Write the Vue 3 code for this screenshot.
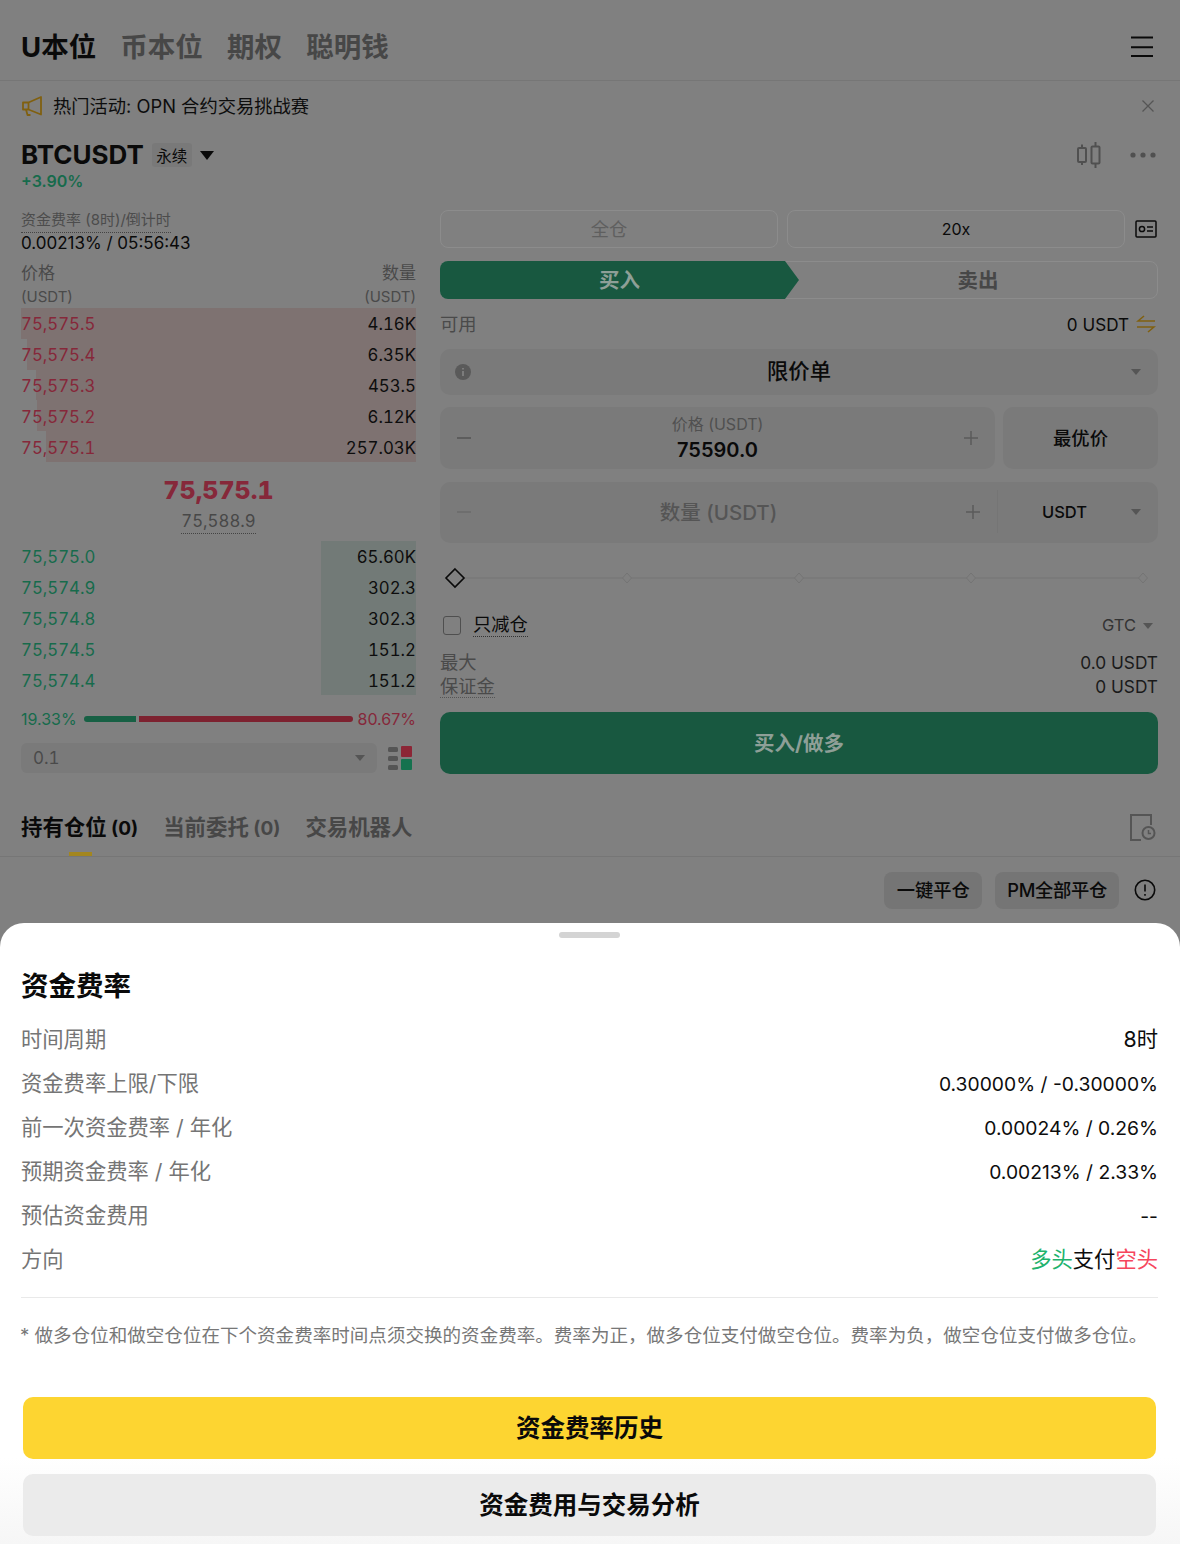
<script setup>
const mainTabs = ['币本位', '期权', '聪明钱']
const asks = [
  { p: '75,575.5', q: '4.16K', w: 395 },
  { p: '75,575.4', q: '6.35K', w: 389 },
  { p: '75,575.3', q: '453.5', w: 380 },
  { p: '75,575.2', q: '6.12K', w: 379 },
  { p: '75,575.1', q: '257.03K', w: 370 },
]
const bids = [
  { p: '75,575.0', q: '65.60K', w: 95 },
  { p: '75,574.9', q: '302.3', w: 95 },
  { p: '75,574.8', q: '302.3', w: 95 },
  { p: '75,574.5', q: '151.2', w: 95 },
  { p: '75,574.4', q: '151.2', w: 95 },
]
const rates = [
  ['资金费率上限/下限', '0.30000% / -0.30000%'],
  ['前一次资金费率 / 年化', '0.00024% / 0.26%'],
  ['预期资金费率 / 年化', '0.00213% / 2.33%'],
  ['预估资金费用', '--'],
]
const ticks = [187, 359, 531, 703]
</script>

<template>
  <div class="page">
    <header class="top">
      <div class="top-tabs">
        <span class="top-tab on">U本位</span>
        <span v-for="t in mainTabs" :key="t" class="top-tab">{{ t }}</span>
      </div>
      <svg class="menu" width="24" height="22" viewBox="0 0 24 22"><path d="M1 1.500h22M1 11.300h22M1 20h22" stroke="#0a0a0a" stroke-width="2"/></svg>
    </header>

    <div class="notice">
      <svg width="22" height="22" viewBox="0 0 22 22" fill="none" stroke="#806010" stroke-width="1.800" stroke-linejoin="round"><path d="M2 7.500h5.500L20 2v17.500L7.500 14.500H2z"/><path d="M5 14.500l1.500 5.500h3"/><path d="M7.500 7.500v7"/></svg>
      <span class="notice-text">热门活动: OPN 合约交易挑战赛</span>
      <svg class="close" width="14" height="14" viewBox="0 0 14 14"><path d="M1.500 1.500l11 11M12.500 1.500l-11 11" stroke="#555" stroke-width="1.300"/></svg>
    </div>

    <div class="symbol">
      <span class="sym-name">BTCUSDT</span>
      <span class="sym-badge">永续</span>
      <span class="sym-caret"></span>
      <span class="sym-tools">
        <svg width="25" height="26" viewBox="0 0 25 26" fill="none" stroke="#505050" stroke-width="2"><rect x="2" y="6" width="8" height="14" rx="1"/><rect x="15.500" y="4.500" width="8" height="17" rx="1"/><path d="M6 2.500V6M6 20v3M19.500 0v4.500M19.500 21.500V26"/></svg>
        <svg class="dots" width="26" height="6" viewBox="0 0 26 6" fill="#505050"><circle cx="3" cy="3" r="2.600"/><circle cx="13" cy="3" r="2.600"/><circle cx="23" cy="3" r="2.600"/></svg>
      </span>
    </div>
    <div class="change">+3.90%</div>

    <div class="main">
      <section class="left">
        <div class="fund-label"><span>资金费率 (8时)/倒计时</span></div>
        <div class="fund-value">0.00213% / 05:56:43</div>
        <div class="book-head">
          <div><div class="hd1">价格</div><div class="hd2">(USDT)</div></div>
          <div class="r"><div class="hd1">数量</div><div class="hd2">(USDT)</div></div>
        </div>
        <div class="book">
          <div v-for="a in asks" :key="a.p" class="book-row">
            <i class="bar ask-bar" :style="{ width: a.w + 'px' }"></i>
            <span class="ask-p">{{ a.p }}</span><span class="qty">{{ a.q }}</span>
          </div>
        </div>
        <div class="mid">
          <div class="mid-price">75,575.1</div>
          <div class="mark"><span>75,588.9</span></div>
        </div>
        <div class="book">
          <div v-for="(b, i) in bids" :key="i" class="book-row">
            <i class="bar bid-bar" :style="{ width: b.w + 'px' }"></i>
            <span class="bid-p">{{ b.p }}</span><span class="qty">{{ b.q }}</span>
          </div>
        </div>
        <div class="ratio">
          <span class="bid-p pct">19.33%</span>
          <i class="r-green"></i><i class="r-red"></i>
          <span class="ask-p pct">80.67%</span>
        </div>
        <div class="depth">
          <div class="depth-select"><span>0.1</span><i class="tri"></i></div>
          <svg width="24" height="24" viewBox="0 0 24 24"><rect x="0" y="1" width="10" height="5" rx="1.500" fill="#555"/><rect x="0" y="10" width="10" height="5" rx="1.500" fill="#555"/><rect x="0" y="19" width="10" height="5" rx="1.500" fill="#555"/><rect x="13" y="0" width="11" height="11" rx="1" fill="#8c2636"/><rect x="13" y="13" width="11" height="11" rx="1" fill="#16724f"/></svg>
        </div>
      </section>

      <section class="right">
        <div class="lev">
          <div class="lev-box muted">全仓</div>
          <div class="lev-box">20x</div>
          <svg width="22" height="20" viewBox="0 0 22 20" fill="none" stroke="#0a0a0a" stroke-width="1.500"><rect x="1" y="2" width="20" height="16" rx="1"/><circle cx="7" cy="10" r="2.600"/><path d="M12 8h6M12 12h6"/></svg>
        </div>
        <div class="side">
          <div class="buy">买入</div>
          <div class="sell">卖出</div>
        </div>
        <div class="avail">
          <span class="lbl">可用</span>
          <span class="avail-v">0 USDT
            <svg width="20" height="20" viewBox="0 0 20 20" fill="none" stroke="#806010" stroke-width="1.600"><path d="M19 7H2l6-5M1 13h17l-6 5"/></svg>
          </span>
        </div>
        <div class="order">
          <svg class="info" width="16" height="16" viewBox="0 0 16 16"><circle cx="8" cy="8" r="8" fill="#5a5a5a"/><path d="M8 7v5M8 4v1.600" stroke="#808080" stroke-width="1.800"/></svg>
          <span>限价单</span>
          <i class="tri right-tri"></i>
        </div>
        <div class="price-row">
          <div class="field price">
            <svg class="pm" width="16" height="16" viewBox="0 0 16 16"><path d="M1 8h14" stroke="#5b5b5b" stroke-width="1.800"/></svg>
            <div class="price-c"><div class="price-l">价格 (USDT)</div><div class="price-v">75590.0</div></div>
            <svg class="pm" width="16" height="16" viewBox="0 0 16 16"><path d="M1 8h14M8 1v14" stroke="#5b5b5b" stroke-width="1.500"/></svg>
          </div>
          <div class="best">最优价</div>
        </div>
        <div class="field qty-f">
          <svg class="pm" width="16" height="16" viewBox="0 0 16 16"><path d="M1 8h14" stroke="#6e6e6e" stroke-width="1.800"/></svg>
          <div class="qty-c">数量 (USDT)</div>
          <svg class="pm" width="16" height="16" viewBox="0 0 16 16"><path d="M1 8h14M8 1v14" stroke="#5b5b5b" stroke-width="1.500"/></svg>
          <div class="unit"><span>USDT</span><i class="tri"></i></div>
        </div>
        <svg class="slider" width="718" height="70" viewBox="0 0 718 70" fill="none">
          <path d="M24 35H703" stroke="#757575" stroke-width="1.200"/>
          <g v-for="t in ticks" :key="t"><path :d="`M${t} 30l4.500 5-4.500 5-4.500-5z`" fill="#808080" stroke="#747474"/></g>
          <path d="M15 26l9 9-9 9-9-9z" fill="#808080" stroke="#0a0a0a" stroke-width="1.600"/>
        </svg>
        <div class="reduce">
          <i class="check"></i>
          <span class="reduce-t">只减仓</span>
          <span class="gtc">GTC<i class="tri sm"></i></span>
        </div>
        <div class="stats">
          <div><div>最大</div><div class="dot-t">保证金</div></div>
          <div class="r stats-v"><div>0.0 USDT</div><div>0 USDT</div></div>
        </div>
        <div class="cta">买入/做多</div>
      </section>
    </div>

    <nav class="pos-tabs">
      <span class="pos-tab on">持有仓位<small> (0)</small></span>
      <span class="pos-tab">当前委托<small> (0)</small></span>
      <span class="pos-tab">交易机器人</span>
      <svg class="hist" width="27" height="28" viewBox="0 0 27 28" fill="none" stroke="#555" stroke-width="2"><path d="M22 12V2H2v25h10"/><circle cx="19.500" cy="20" r="6"/><path d="M19.500 17v3.500h2.500" stroke-width="1.500"/></svg>
    </nav>
    <div class="actions">
      <span class="act">一键平仓</span>
      <span class="act act-pm">PM全部平仓</span>
      <svg width="22" height="22" viewBox="0 0 22 22" fill="none" stroke="#0a0a0a" stroke-width="1.600"><circle cx="11" cy="11" r="9.700"/><path d="M11 5.500v7M11 15v1.800"/></svg>
    </div>

    <aside class="sheet">
      <div class="handle"></div>
      <h2 class="sheet-title">资金费率</h2>
      <div class="rate">
        <span class="rate-k">时间周期</span>
        <span class="rate-v cjk">8时</span>
      </div>
      <div class="rate" v-for="r in rates" :key="r[0]">
        <span class="rate-k">{{ r[0] }}</span><span class="rate-v">{{ r[1] }}</span>
      </div>
      <div class="rate">
        <span class="rate-k">方向</span>
        <span class="rate-v cjk"><b class="long">多头</b>支付<b class="short">空头</b></span>
      </div>
      <div class="divider"></div>
      <p class="note">* 做多仓位和做空仓位在下个资金费率时间点须交换的资金费率。费率为正，做多仓位支付做空仓位。费率为负，做空仓位支付做多仓位。</p>
      <button class="btn yellow">资金费率历史</button>
      <button class="btn gray">资金费用与交易分析</button>
    </aside>
  </div>
</template>

<style>
html, body { margin: 0; background: #808080; }
</style>

<style scoped>
* { box-sizing: border-box; }
.page {
  position: relative; width: 1180px; height: 1544px; overflow: hidden;
  background: #808080; color: #0a0a0a;
  font-family: Inter, "Noto Sans CJK SC", sans-serif; font-size: 17px;
}
i { display: block; font-style: normal; }
.r { text-align: right; }

.top { height: 81px; display: flex; align-items: center; justify-content: space-between; padding: 10px 26px 0 21px; border-bottom: 1px solid #767676; }
.top-tabs { display: flex; gap: 24.200px; }
.top-tab { font-size: 27.500px; font-weight: 700; color: #474747; }
.top-tab.on { color: #0a0a0a; }
.menu { margin-top: 4px; }

.notice { height: 51px; display: flex; align-items: center; padding: 0 25px 2px 21px; }
.notice-text { margin: 0 0 2px 10px; font-size: 18.300px; color: #0d0d0d; flex: 1; }

.symbol { height: 30px; margin-top: 8px; display: flex; align-items: center; padding: 0 24px 0 21px; }
.sym-name { font-size: 26px; font-weight: 700; padding-bottom: 2px; }
.sym-badge { margin-left: 8px; width: 40px; height: 24px; border-radius: 3px; background: #797979; font-size: 15.500px; display: flex; align-items: center; justify-content: center; }
.sym-caret { margin-left: 8px; width: 0; height: 0; border-left: 7px solid transparent; border-right: 7px solid transparent; border-top: 9px solid #0a0a0a; }
.sym-tools { margin-left: auto; display: flex; align-items: center; }
.dots { margin-left: 29px; }
.change { height: 22px; line-height: 22px; padding-left: 21px; font-size: 16px; font-weight: 600; color: #176b4c; }

.main { display: flex; gap: 24px; padding: 0 22px 0 21px; margin-top: 18px; }
.left { width: 395px; }
.right { width: 718px; }

.fund-label { height: 23px; line-height: 20px; font-size: 15px; color: #4c4c4c; }
.fund-label span { display: inline-block; height: 23px; border-bottom: 1px dotted #444; }
.fund-value { height: 19px; line-height: 21px; font-size: 17px; }
.book-head { margin-top: 10px; height: 46px; display: flex; justify-content: space-between; color: #4a4a4a; }
.hd1 { height: 23px; line-height: 23px; font-size: 17px; }
.hd2 { height: 23px; line-height: 23px; font-size: 15px; }

.book-row { position: relative; height: 30.800px; padding-top: 2px; display: flex; align-items: center; justify-content: space-between; font-size: 16.800px; font-variant-numeric: tabular-nums; }
.book-row span { position: relative; }
.bar { position: absolute; right: 0; top: 0; bottom: 0; }
.ask-bar { background: #7e7271; }
.bid-bar { background: #727a77; }
.ask-p { color: #86283a; }
.bid-p { color: #176b4c; }
.qty { color: #0d0d0d; }

.mid { height: 79px; padding-top: 12px; text-align: center; }
.mid-price { height: 32px; line-height: 32px; font-size: 25px; font-weight: 800; color: #86283a; font-variant-numeric: tabular-nums; }
.mark { margin-top: 4px; height: 24px; font-size: 16.800px; color: #484848; font-variant-numeric: tabular-nums; }
.mark span { display: inline-block; height: 24px; line-height: 22px; border-bottom: 1px dotted #444; }

.ratio { margin-top: 14px; height: 20px; display: flex; align-items: center; padding-top: 1px; }
.pct { font-size: 16px; }
.r-green { margin-left: 7px; width: 52px; height: 6px; background: #176044; border-radius: 3px 0 0 3px; }
.r-red { margin-left: 3px; width: 214px; height: 6px; background: #7d2230; border-radius: 0 3px 3px 0; }
.ratio .pct:last-child { margin-left: auto; }
.depth { margin-top: 14px; display: flex; align-items: center; justify-content: space-between; padding-right: 4px; }
.depth-select { width: 356px; height: 30px; border-radius: 6px; background: #7a7a7a; display: flex; align-items: center; justify-content: space-between; padding: 1px 12px 0; color: #4a4a4a; font-variant-numeric: tabular-nums; }
.tri { width: 0; height: 0; border-left: 5px solid transparent; border-right: 5px solid transparent; border-top: 6px solid #555; }
.tri.sm { display: inline-block; margin-left: 7px; vertical-align: 2px; }

.lev { height: 38px; display: flex; align-items: center; }
.lev-box { width: 338px; height: 38px; margin-right: 9px; border: 1px solid #8c8c8c; border-radius: 8px; display: flex; align-items: center; justify-content: center; font-size: 16px; }
.lev-box.muted { color: #5f5f5f; font-size: 18.300px; padding-bottom: 2px; }
.lev svg { margin-left: 1px; }

.side { margin-top: 13px; height: 38px; display: flex; border: 1px solid #8c8c8c; border-radius: 8px; position: relative; font-size: 20.500px; font-weight: 700; }
.buy { margin: -1px 0 -1px -1px; width: 359px; padding-bottom: 2px; background: #185840; color: #8e9f97; border-radius: 8px 0 0 8px; display: flex; align-items: center; justify-content: center; clip-path: polygon(0 0, 345px 0, 100% 50%, 345px 100%, 0 100%); }
.sell { flex: 1; padding-bottom: 2px; color: #474747; display: flex; align-items: center; justify-content: center; }

.avail { height: 50px; display: flex; align-items: center; justify-content: space-between; padding-right: 2px; }
.lbl { color: #4a4a4a; font-size: 18.300px; padding-bottom: 2px; }
.avail-v { display: flex; align-items: center; gap: 7px; font-size: 17.100px; }

.order { height: 46px; padding-bottom: 5px; border-radius: 10px; background: #7a7a7a; position: relative; display: flex; align-items: center; justify-content: center; font-size: 21.300px; font-weight: 500; }
.info { position: absolute; left: 15px; top: 15px; }
.right-tri { position: absolute; right: 17px; top: 20px; }

.price-row { margin-top: 12px; display: flex; gap: 8px; }
.field { background: #7a7a7a; border-radius: 10px; display: flex; align-items: center; }
.price { width: 555px; height: 62px; padding: 0 16px; justify-content: space-between; }
.pm { flex: none; }
.price-c { text-align: center; padding-top: 3px; }
.price-l { font-size: 16px; line-height: 20px; color: #505050; margin: -2px 0 2px; }
.price-v { font-size: 20px; line-height: 28px; font-weight: 600; }
.best { flex: 1; height: 62px; padding-bottom: 3px; border-radius: 10px; background: #7a7a7a; display: flex; align-items: center; justify-content: center; font-size: 18.300px; font-weight: 500; }

.qty-f { margin-top: 13px; height: 61px; padding: 0 0 2px 16px; }
.qty-c { width: 493px; padding-bottom: 2px; text-align: center; font-size: 20.500px; font-weight: 500; color: #555; }
.unit { margin-left: 16px; height: 43px; flex: 1; border-left: 1px solid #757575; display: flex; align-items: center; padding: 0 17px 0 44px; justify-content: space-between; font-size: 16.500px; font-weight: 500; }
.slider { display: block; }

.reduce { height: 24px; display: flex; align-items: center; padding-left: 3px; }
.check { width: 18px; height: 19px; border: 1.500px solid #4f4f4f; border-radius: 3px; }
.reduce-t { margin-left: 12px; height: 24px; line-height: 23px; border-bottom: 1px dotted #333; font-size: 18.300px; }
.gtc { margin-left: auto; font-size: 16.500px; color: #333; padding-right: 5px; }

.stats { margin-top: 13px; height: 48px; display: flex; justify-content: space-between; line-height: 24px; color: #4a4a4a; font-size: 18.300px; }
.dot-t { border-bottom: 1px dotted #555; height: 24px; }
.stats-v { color: #1a1a1a; font-size: 17.300px; padding-top: 1px; }
.cta { margin-top: 14px; height: 62px; padding-bottom: 2px; border-radius: 10px; background: #185840; color: #8e9f97; display: flex; align-items: center; justify-content: center; font-size: 20.500px; font-weight: 700; }

.pos-tabs { position: relative; margin-top: 24px; height: 59px; padding: 0 24px 0 21px; display: flex; align-items: center; gap: 25px; border-bottom: 1px solid #767676; }
.pos-tabs::after { content: ""; position: absolute; left: 69px; width: 23px; bottom: 0; height: 4px; background: #a3861f; }
.pos-tab { font-size: 21.400px; font-weight: 700; color: #474747; padding-bottom: 3px; }
.pos-tab small { font-size: 19px; }
.pos-tab.on { color: #0a0a0a; }
.hist { margin-left: auto; }
.actions { padding: 15px 24px 0 0; display: flex; justify-content: flex-end; align-items: center; gap: 13px; }
.act { height: 37px; padding: 0 12.500px 3px; border-radius: 8px; background: #757575; display: flex; align-items: center; font-size: 18.300px; font-weight: 500; }
.act-pm { letter-spacing: -.3px; padding: 0 12px 3px; }
.actions svg { margin: 0 0 1px 2px; }

.sheet { position: absolute; left: 0; right: 0; top: 923px; bottom: 0; background: linear-gradient(#fff 86%, #f6f6f6 100%); border-radius: 24px 24px 0 0; padding: 9px 22px 0 22px; color: #0d0d0d; }
.handle { width: 61px; height: 6px; margin: 0 0 0 537px; border-radius: 3px; background: #d4d4d4; }
.sheet-title { margin: 30px 0 13px -1px; font-size: 27.500px; line-height: 36px; font-weight: 700; color: #0a0a0a; }
.rate { height: 44px; line-height: 44px; display: flex; align-items: baseline; justify-content: space-between; font-size: 21.300px; margin-left: -1px; }
.rate-k { color: #757575; }
.rate-v { font-size: 19.300px; }
.rate-v.cjk { font-size: 21.300px; }
.rate-v b { font-weight: 400; }
.long { color: #20b26c; }
.short { color: #f6465d; }
.divider { margin: 16px 0 0 -1px; height: 1px; background: #e9e9e9; }
.note { margin: 25px 0 0 -2px; height: 24px; line-height: 24px; font-size: 18.560px; color: #777; white-space: nowrap; }
.btn { display: block; width: 1133px; height: 62px; margin-left: 1px; padding: 0 0 4px; border: 0; border-radius: 10px; font: inherit; font-size: 24.500px; font-weight: 700; color: #0a0a0a; }
.yellow { margin-top: 50px; background: #fdd531; }
.gray { margin-top: 15px; background: #ebebeb; }
</style>
